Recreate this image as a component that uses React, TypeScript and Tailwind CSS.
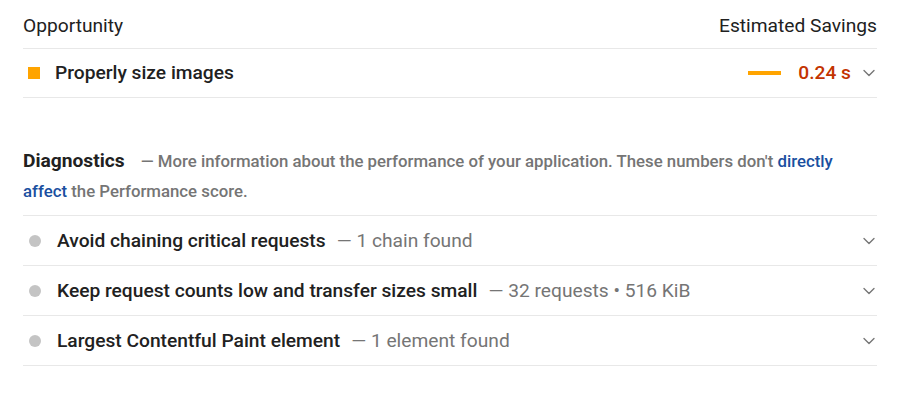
import { ChevronDown } from 'lucide-react';

const diagnostics = [
  { title: 'Avoid chaining critical requests', detail: '1 chain found' },
  { title: 'Keep request counts low and transfer sizes small', detail: '32 requests • 516 KiB' },
  { title: 'Largest Contentful Paint element', detail: '1 element found' },
];

function Chevron() {
  return <ChevronDown size={20} strokeWidth={1.6} className="text-[#757575] shrink-0" />;
}

export default function App() {
  return (
    <div className="min-h-screen bg-white px-[23px] text-[#212121]" style={{ fontFamily: 'Roboto, "Liberation Sans", sans-serif' }}>
      <div className="w-[854px]">
        {/* Opportunity header */}
        <div className="flex h-[49px] items-end justify-between border-b border-[#e8e8e8] pb-[10px] text-[19.2px] leading-[24px]">
          <span>Opportunity</span>
          <span>Estimated Savings</span>
        </div>

        <div className="flex h-[49px] items-center border-b border-[#e8e8e8]">
          <span className="ml-[5px] h-[12px] w-[12px] bg-[#ffa400]" />
          <span className="ml-[15px] text-[19.2px] font-medium leading-[24px]">Properly size images</span>
          <div className="ml-auto flex items-center">
            <span className="h-[4px] w-[33px] bg-[#ffa400]" />
            <span className="ml-[17px] text-[19.2px] font-medium leading-[24px] text-[#c33300]">0.24 s</span>
            <span className="ml-[8px] mr-[-2px]"><Chevron /></span>
          </div>
        </div>

        {/* Diagnostics */}
        <div className="border-b border-[#e8e8e8] pt-[48px] pb-[9px] text-[16.8px] leading-[30px]">
          <span className="text-[19.2px] font-bold text-[#212121]">Diagnostics</span>
          <span className="ml-[16px] font-medium text-[#757575]">
            — More information about the performance of your application. These numbers don't{' '}
            <a className="text-[#1a4fa0]">directly affect</a> the Performance score.
          </span>
        </div>

        {diagnostics.map((d) => (
          <div key={d.title} className="flex h-[50px] items-center border-b border-[#e8e8e8]">
            <span className="ml-[6px] h-[12px] w-[12px] rounded-full bg-[#c4c4c4]" />
            <span className="ml-[16px] text-[19.2px] font-medium leading-[24px]">{d.title}</span>
            <span className="ml-[11px] text-[19.2px] leading-[24px] text-[#757575]">— {d.detail}</span>
            <span className="ml-auto mr-[-2px]"><Chevron /></span>
          </div>
        ))}
      </div>
    </div>
  );
}
